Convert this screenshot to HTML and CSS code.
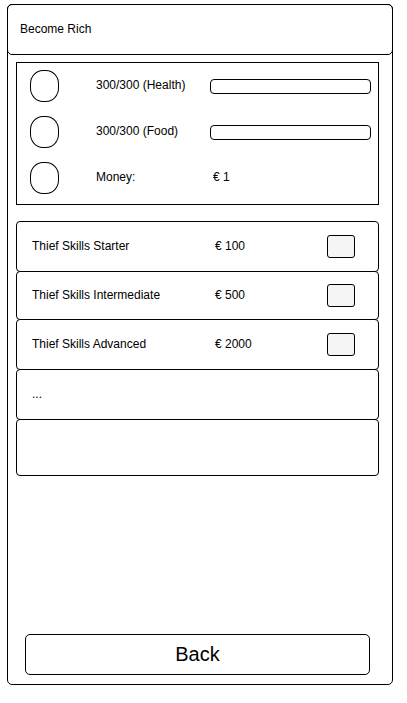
FILE: index.html
```html
<!DOCTYPE html>
<html>
<head>
<meta charset="utf-8">
<link rel="stylesheet" href="styles.css">
</head>
<body>
<div class="frame">
  <div class="header">Become Rich</div>
  <div class="stats">
    <div class="stat-row">
      <div class="avatar"></div>
      <div class="label">300/300 (Health)</div>
      <div class="bar"></div>
    </div>
    <div class="stat-row">
      <div class="avatar"></div>
      <div class="label">300/300 (Food)</div>
      <div class="bar"></div>
    </div>
    <div class="stat-row">
      <div class="avatar"></div>
      <div class="label">Money:</div>
      <div class="value">€ 1</div>
    </div>
  </div>
  <div class="list">
    <div class="item item-a">
      <div class="name">Thief Skills Starter</div>
      <div class="price">€ 100</div>
      <div class="check"></div>
    </div>
    <div class="item item-b">
      <div class="name">Thief Skills Intermediate</div>
      <div class="price">€ 500</div>
      <div class="check"></div>
    </div>
    <div class="item item-a">
      <div class="name">Thief Skills Advanced</div>
      <div class="price">€ 2000</div>
      <div class="check"></div>
    </div>
    <div class="item item-a">
      <div class="name">...</div>
    </div>
    <div class="item item-empty"></div>
  </div>
  <div class="back">Back</div>
</div>
</body>
</html>
```

FILE: styles.css
```css
html, body {
  margin: 0;
  padding: 0;
  background: #fff;
}
body {
  font-family: "Liberation Sans", Arial, sans-serif;
  font-size: 12px;
  color: #000;
}
.frame {
  box-sizing: border-box;
  margin: 4px 0 0 7px;
  width: 386px;
  height: 681px;
  border: 1px solid #000;
  border-radius: 5px;
  display: flex;
  flex-direction: column;
}
.header {
  box-sizing: border-box;
  margin: -1px -1px 0 -1px;
  height: 51px;
  border: 1px solid #000;
  border-radius: 5px;
  padding: 0 0 2px 12px;
  display: flex;
  align-items: center;
  flex-shrink: 0;
}
.stats {
  box-sizing: border-box;
  margin: 7px 0 0 8px;
  width: 363px;
  height: 143px;
  border: 1px solid #000;
  padding: 7px 7px 0 13px;
  display: flex;
  flex-direction: column;
  gap: 14px;
  flex-shrink: 0;
}
.stat-row {
  display: grid;
  grid-template-columns: 66px 114px 1fr;
  align-items: center;
  height: 32px;
}
.avatar {
  box-sizing: border-box;
  width: 29px;
  height: 32px;
  border: 1px solid #000;
  border-radius: 13px / 14px;
}
.label,
.value,
.name,
.price {
  padding-bottom: 2px;
}
.bar {
  box-sizing: border-box;
  height: 15px;
  border: 1px solid #000;
  border-radius: 4px;
}
.value {
  padding-left: 3px;
}
.list {
  margin: 16px 0 0 8px;
  width: 363px;
  display: flex;
  flex-direction: column;
  flex-shrink: 0;
}
.item {
  box-sizing: border-box;
  border: 1px solid #000;
  border-radius: 4px;
  display: grid;
  grid-template-columns: 183px 1fr 28px;
  align-items: center;
  padding: 0 23px 0 15px;
  margin-top: -1px;
  background: #fff;
}
.item:first-child {
  margin-top: 0;
}
.item-a {
  height: 51px;
}
.item-b {
  height: 49px;
}
.item-empty {
  height: 57px;
}
.check {
  box-sizing: border-box;
  width: 28px;
  height: 23px;
  border: 1px solid #000;
  border-radius: 3px;
  background: #f5f5f5;
}
.back {
  box-sizing: border-box;
  margin: auto 0 9px 17px;
  width: 345px;
  height: 41px;
  border: 1px solid #000;
  border-radius: 5px;
  font-size: 20px;
  display: flex;
  align-items: center;
  justify-content: center;
  flex-shrink: 0;
}
```
